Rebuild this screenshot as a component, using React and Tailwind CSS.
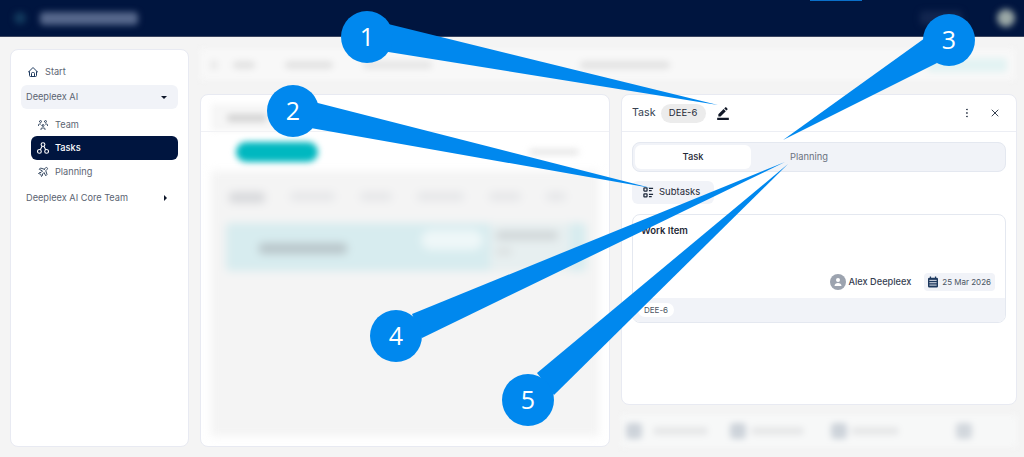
import React from "react";
import { MdBorderColor } from "react-icons/md";
import { TbHome, TbUsersGroup, TbPlaneTilt, TbDotsVertical, TbX } from "react-icons/tb";

function Callouts() {
  const circles = [
    ["1", 367, 37],
    ["2", 293, 111],
    ["3", 949, 40],
    ["4", 396, 336],
    ["5", 528, 400],
  ];
  return (
    <>
      <svg className="absolute left-0 top-0" width="1024" height="457" viewBox="0 0 1024 457" fill="#0088ee">
        <polygon points="380,22 718,105 376,50" />
        <polygon points="310,101 651,188 305,127" />
        <polygon points="925,38 783,140 937,63" />
        <polygon points="412,314 785,162 422,338" />
        <polygon points="537,373 788,164 554,395" />
      </svg>
      {circles.map(([n, x, y]) => (
        <div
          key={n}
          style={{ left: x - 26, top: y - 26 }}
          className="absolute flex h-[52px] w-[52px] items-center justify-center rounded-full bg-[#0088ee] font-['Open_Sans',sans-serif] text-[25px] text-white"
        >
          {n}
        </div>
      ))}
    </>
  );
}

function Blur({ className }) {
  return <div className={className} />;
}

function Caret({ right }) {
  return right ? (
    <span className="h-0 w-0 border-y-[3px] border-l-[3px] border-y-transparent border-l-[#0f172a]" />
  ) : (
    <span className="h-0 w-0 border-x-[3px] border-t-[3px] border-x-transparent border-t-[#0f172a]" />
  );
}

function TasksIcon() {
  return (
    <svg width="12" height="12" viewBox="0 0 12 12" fill="none" stroke="white" strokeWidth="1.1">
      <circle cx="6" cy="2.6" r="1.9" />
      <circle cx="2.4" cy="9.4" r="1.9" />
      <circle cx="9.6" cy="9.4" r="1.9" />
      <path d="M5.100 4.300 3.300 7.700M6.900 4.300 8.700 7.700" />
    </svg>
  );
}

function Sidebar() {
  return (
    <aside className="flex h-[398px] w-[179px] shrink-0 flex-col rounded-lg border border-[#e8eaf2] bg-white px-[10px] pt-[10px] text-[9.2px] text-[#5b6472]">
      <div className="flex h-6 items-center gap-[6px] pl-[6px]">
        <TbHome size={12} className="text-[#1e3a5f]" />
        <span>Start</span>
      </div>
      <div className="mt-[1px] flex h-6 items-center justify-between rounded-md bg-[#f1f3f8] pl-[5px] pr-[11px]">
        <span>Deepleex AI</span>
        <Caret />
      </div>
      <div className="mt-[4px] flex flex-col pl-[10px]">
        <div className="flex h-[23px] items-center gap-[6px] pl-[6px]">
          <TbUsersGroup size={12} className="text-[#374a63]" />
          <span>Team</span>
        </div>
        <div className="flex h-6 items-center gap-[6px] rounded-md bg-[#00153f] pl-[6px] text-white">
          <TasksIcon />
          <span className="font-medium">Tasks</span>
        </div>
        <div className="flex h-6 items-center gap-[6px] pl-[6px]">
          <TbPlaneTilt size={12} className="text-[#374a63]" />
          <span>Planning</span>
        </div>
      </div>
      <div className="mt-[2px] flex h-6 items-center justify-between pl-[5px] pr-[11px]">
        <span>Deepleex AI Core Team</span>
        <Caret right />
      </div>
    </aside>
  );
}

function MiddleCard() {
  return (
    <section className="flex h-[353px] w-[410px] shrink-0 flex-col overflow-hidden rounded-lg border border-[#e8eaf2] bg-white px-[10px] pb-[10px] pt-[9px]">
      <div className="flex h-[27px] w-[90px] shrink-0 items-center bg-[#f6f6f6] pl-4 blur-[3px]">
        <Blur className="h-2 w-10 rounded bg-[#d5d5d5]" />
      </div>
      <div className="-mx-[10px] h-px shrink-0 bg-[#f0f1f5]" />
      <div className="flex h-[39px] shrink-0 items-center justify-between pl-[25px] pr-5 blur-[3px]">
        <Blur className="h-[20px] w-[82px] rounded-full bg-[#00b8c0]" />
        <Blur className="h-[6px] w-[50px] rounded bg-[#e6e6e6]" />
      </div>
      <div className="flex flex-1 flex-col bg-[#f4f4f4] px-[15px] pt-[21px] blur-[4px]">
        <div className="flex gap-[25px] px-[3px]">
          <Blur className="h-[11px] w-[36px] rounded bg-[#d8d9dc]" />
          <Blur className="h-[9px] w-[45px] rounded bg-[#e6e7e9]" />
          <Blur className="h-[9px] w-[32px] rounded bg-[#e6e7e9]" />
          <Blur className="h-[9px] w-[47px] rounded bg-[#e6e7e9]" />
          <Blur className="h-[9px] w-[32px] rounded bg-[#e6e7e9]" />
          <Blur className="h-[9px] w-[20px] rounded bg-[#e6e7e9]" />
        </div>
        <div className="mt-[20px] flex h-[48px] w-[360px] items-start rounded bg-[#d7ecef] pl-[33px]">
          <Blur className="mt-[20px] h-[11px] w-[88px] rounded bg-[#b9c6ca]" />
          <Blur className="ml-[74px] mt-[7px] h-[20px] w-[62px] rounded-full bg-[#eef7f8]" />
          <div className="ml-[7px] flex h-[48px] w-[80px] flex-col gap-[8px] bg-[#e7eff0] pl-[6px] pt-[8px]">
            <Blur className="h-[9px] w-[62px] rounded bg-[#d0d6d8]" />
            <Blur className="h-[7px] w-[16px] rounded bg-[#dadfe0]" />
          </div>
        </div>
      </div>
    </section>
  );
}

function SubtaskIcon() {
  return (
    <svg width="11" height="11" viewBox="0 0 12 12" fill="none" stroke="#1e293b" strokeWidth="1.4">
      <rect x="1" y="1" width="3.4" height="3.4" rx="0.6" />
      <rect x="1" y="7.4" width="3.4" height="3.4" rx="0.6" />
      <path d="M6.500 1.400h4.500M6.500 4h3M6.500 8h4.500M6.500 10.600h3" />
    </svg>
  );
}

function CalendarIcon() {
  return (
    <svg width="10" height="12" viewBox="0 0 11 12" fill="#1e3a5f">
      <path d="M2 0h1.400v1.200h4.200V0H9v1.200h.6A1.400 1.400 0 0 1 11 2.600v8A1.400 1.400 0 0 1 9.600 12H1.400A1.400 1.400 0 0 1 0 10.600V2.600A1.400 1.400 0 0 1 1.400 1.200H2z" />
      <path d="M1.500 4.200h8M1.500 6.800h8M1.500 9.400h8" stroke="#f1f3f8" strokeWidth="1" />
    </svg>
  );
}

function TaskCard() {
  return (
    <section className="flex h-[311px] w-[396px] shrink-0 flex-col rounded-lg border border-[#e8eaf2] bg-white text-[#1f2937]">
      <header className="flex h-[37px] shrink-0 items-center border-b border-[#eceef4] pl-[10px] pr-[15px]">
        <span className="text-[10.7px] text-[#374151]">Task</span>
        <span className="ml-[5px] flex h-[19px] w-[45px] items-center justify-center rounded-full bg-[#ececec] text-[9.5px] text-[#1f2937]">
          DEE-6
        </span>
        <MdBorderColor size={14} className="ml-[10px] text-[#111827]" />
        <TbDotsVertical size={12} className="ml-auto text-[#374151]" />
        <TbX size={12} className="ml-[16px] text-[#374151]" />
      </header>
      <div className="flex flex-1 flex-col px-[10px] pt-[10px]">
        <div className="flex h-[30px] items-center rounded-lg border border-[#e4e8f0] bg-[#f1f3f8] px-[2px] text-[9.3px]">
          <div className="flex h-[24px] w-[116px] items-center justify-center rounded-md bg-white font-medium text-[#1f2937]">
            Task
          </div>
          <div className="ml-[39px] text-[#6b7280]">Planning</div>
        </div>
        <div className="mt-[9px] flex h-[23px] w-[82px] items-center gap-[5px] rounded-md bg-[#f1f3f8] pl-[11px] text-[9.5px] text-[#1f2937]">
          <SubtaskIcon />
          <span>Subtasks</span>
        </div>
        <div className="mt-[10px] flex h-[109px] flex-col overflow-hidden rounded-lg border border-[#e4e8f0]">
          <div className="flex flex-1 flex-col px-[8px] pt-[9px]">
            <span className="text-[9.5px] font-semibold text-[#1f2937]">Work Item</span>
            <div className="mb-[7px] mt-auto flex items-center justify-end pr-[2px]">
              <span className="flex h-4 w-4 items-center justify-center rounded-full bg-[#9ca3af]">
                <svg width="10" height="10" viewBox="0 0 10 10" fill="white">
                  <circle cx="5" cy="3" r="2" />
                  <path d="M1.500 9c0-2 1.600-3 3.500-3s3.500 1 3.500 3z" />
                </svg>
              </span>
              <span className="ml-[3px] text-[9.2px] font-medium text-[#374151]">Alex Deepleex</span>
              <span className="ml-[13px] flex h-[18px] items-center gap-[4px] rounded bg-[#f1f3f8] px-[4px] text-[8px] text-[#4b5563]">
                <CalendarIcon />
                25 Mar 2026
              </span>
            </div>
          </div>
          <div className="flex h-[24px] shrink-0 items-center bg-[#f1f3f8] pl-[5px]">
            <span className="flex h-[14px] items-center rounded-full bg-white px-[6px] text-[8px] text-[#4b5563]">DEE-6</span>
          </div>
        </div>
      </div>
    </section>
  );
}

function BottomBar() {
  return (
    <div className="mt-[10px] flex h-[32px] items-center bg-[#f7f8f8] pl-[5px] blur-[3px]">
      <Blur className="h-[16px] w-[16px] rounded bg-[#cdd3da]" />
      <Blur className="ml-[11px] h-[8px] w-[55px] rounded bg-[#e6e7e8]" />
      <Blur className="ml-[22px] h-[16px] w-[16px] rounded bg-[#cdd3da]" />
      <Blur className="ml-[5px] h-[8px] w-[53px] rounded bg-[#e6e7e8]" />
      <Blur className="ml-[27px] h-[16px] w-[16px] rounded bg-[#cdd3da]" />
      <Blur className="ml-[4px] h-[8px] w-[48px] rounded bg-[#e6e7e8]" />
      <Blur className="ml-[57px] h-[16px] w-[16px] rounded bg-[#d2d7dd]" />
    </div>
  );
}

export default function App() {
  return (
    <div className="relative h-[457px] w-[1024px] overflow-hidden bg-[#f4f4f4] font-['Inter',sans-serif]">
      <header className="relative flex h-[37px] items-center border-b border-[#3b4560] bg-[#00153f] pl-[14px]">
        <div className="flex items-center blur-[3px]">
          <Blur className="h-[12px] w-[12px] rounded-full bg-[#123a5e]" />
          <Blur className="ml-[14px] h-[13px] w-[98px] rounded bg-[#56688c]" />
        </div>
        <div className="absolute left-[810px] top-0 h-[1px] w-[52px] bg-[#0a6fc9]" />
        <div className="ml-auto h-[14px] w-[42px] rounded bg-[#12264f] blur-[3px]" />
        <div className="ml-[35px] mr-[9px] h-[18px] w-[18px] rounded-full bg-[#9aa8a6] blur-[3px]" />
      </header>
      <main className="flex pl-[10px] pt-[12px]">
        <Sidebar />
        <div className="ml-[11px] flex w-[815px] flex-col">
          <div className="flex h-[31px] items-center bg-[#f8f8f8] pl-[10px] blur-[3px]">
            <Blur className="h-[10px] w-[8px] rounded bg-[#eaeaea]" />
            <Blur className="ml-[15px] h-[8px] w-[22px] rounded bg-[#e3e3e3]" />
            <Blur className="ml-[30px] h-[8px] w-[48px] rounded bg-[#e3e3e3]" />
            <Blur className="ml-[30px] h-[8px] w-[69px] rounded bg-[#e6e6e6]" />
            <Blur className="ml-[148px] h-[8px] w-[90px] rounded bg-[#e3e3e3]" />
            <Blur className="ml-auto mr-[8px] h-[14px] w-[80px] rounded bg-[#e3f3f3]" />
          </div>
          <div className="mt-[14px] flex gap-[11px]">
            <MiddleCard />
            <div className="flex flex-col">
              <TaskCard />
              <BottomBar />
            </div>
          </div>
        </div>
      </main>
      <Callouts />
    </div>
  );
}
